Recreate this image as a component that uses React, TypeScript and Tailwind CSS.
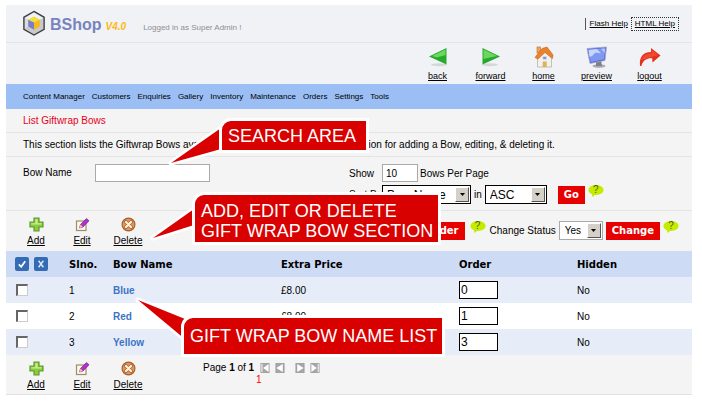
import React from "react";

type IconProps = { className?: string };

function Logo() {
  return (
    <svg viewBox="0 0 24 28" className="h-[27px] w-[24px] shrink-0" aria-hidden="true">
      <polygon points="12,1.5 22.5,7.5 22.5,20 12,26 1.5,20 1.5,7.5" fill="#c9c9cc" stroke="#3c3c40" strokeWidth="1.4" />
      <polygon points="12,2.8 21.3,8.2 18,10 12,7 6,10 2.7,8.2" fill="#f2f2f3" />
      <polygon points="2.7,8.2 6,10 6,17 2.7,19.2" fill="#dcdcde" />
      <polygon points="12,7 18,10 12,13 6,10" fill="#f2e22c" />
      <polygon points="6,10 12,13 12,20.5 6,17" fill="#7580c6" />
      <polygon points="18,10 12,13 12,20.5 18,17" fill="#fbb81c" />
    </svg>
  );
}

function BackIcon() {
  return (
    <svg viewBox="0 0 20 20" className="size-5" aria-hidden="true">
      <ellipse cx="11" cy="17.8" rx="8" ry="1.5" fill="#d3d8d6" />
      <polygon points="1,9.5 18.5,1 18.5,17.5" fill="#27a92b" />
      <polygon points="4,9 17.5,2.5 17.5,8 9,10.5" fill="#6bd75f" />
    </svg>
  );
}

function ForwardIcon() {
  return (
    <svg viewBox="0 0 20 20" className="size-5" aria-hidden="true">
      <ellipse cx="9" cy="17.8" rx="8" ry="1.5" fill="#d3d8d6" />
      <polygon points="19,9.5 1.5,1 1.5,17.5" fill="#27a92b" />
      <polygon points="16,9 2.5,2.5 2.5,12 9,10.5" fill="#6bd75f" />
    </svg>
  );
}

function HomeIcon() {
  return (
    <svg viewBox="0 0 20 22" className="h-[22px] w-5" aria-hidden="true">
      <polygon points="3.5,11 10.5,4.5 17.5,12 17.5,21 3.5,21" fill="#f4f1ea" stroke="#b6b3ad" strokeWidth="0.8" />
      <rect x="3" y="1" width="3.4" height="6" fill="#f0a35c" stroke="#c46a22" strokeWidth="0.6" />
      <path d="M1 11.5 L8 2.5 L13 1 L19 9 L18.5 12.5 L11 6.5 L4 13 Z" fill="#e9822b" stroke="#c2611b" strokeWidth="0.6" />
      <rect x="8.8" y="10.4" width="3.8" height="3" rx="0.8" fill="#7f95d8" stroke="#dde2f4" strokeWidth="0.7" />
      <rect x="8.7" y="15.5" width="4" height="5.5" fill="#d9b560" />
    </svg>
  );
}

function PreviewIcon() {
  return (
    <svg viewBox="0 0 22 22" className="size-[22px]" aria-hidden="true">
      <ellipse cx="13" cy="20" rx="6.5" ry="1.7" fill="#a9abb0" />
      <polygon points="10,15 15,14 16,20 10,20" fill="#7e8086" />
      <polygon points="1,2.5 20.5,1 19,14.5 4,17.5" fill="#5b6bd0" stroke="#a3a9c9" strokeWidth="0.8" />
      <polygon points="2.3,3.6 19.3,2.3 18,13.3 4.8,16" fill="#7f98f2" />
      <path d="M2.5 4 L11 3 L15 7.5 L9.5 6.5 L6 10 L3.6 11 Z" fill="#c8d6ff" />
      <path d="M15 2.8 L19 2.6 L18.6 7 Z" fill="#b7c7ff" />
    </svg>
  );
}

function LogoutIcon() {
  return (
    <svg viewBox="0 0 22 20" className="h-5 w-[22px]" aria-hidden="true">
      <path d="M1 19 C0 9 5 5 12 5 L12 1 L21.5 8.5 L13.5 15.5 L13.2 11.3 C8 11 4 13 2.4 19 Z" fill="#e5301c" />
      <path d="M2.5 13 C4 8 8 6.5 13 6.5 L13 3 L19 8 Z" fill="#ee4a2e" />
    </svg>
  );
}

function AddIcon() {
  return (
    <svg viewBox="0 0 15 15" className="size-[15px]" aria-hidden="true">
      <path d="M5 1 H10 V5 H14 V10 H10 V14 H5 V10 H1 V5 H5 Z" fill="#8ccb3c" stroke="#5c9a30" strokeWidth="1.2" />
      <path d="M6.3 2.3 H8.7 V6.3 H12.7 V7.5 H2.3 V6.3 H6.3 Z" fill="#c9ec8c" />
    </svg>
  );
}

function EditIcon() {
  return (
    <svg viewBox="0 0 15 15" className="size-[15px]" aria-hidden="true">
      <rect x="1.5" y="4" width="9.5" height="9.5" fill="#fbf8ee" stroke="#9a8f62" strokeWidth="1.2" />
      <path d="M4.5 11 L5.5 7.5 L11.5 1.5 L14 3.8 L8 10 Z" fill="#b52fd0" stroke="#7c1a96" strokeWidth="0.7" />
      <path d="M4.3 11.2 L5.5 7.6 L7.9 10 Z" fill="#efc48e" />
    </svg>
  );
}

function DeleteIcon() {
  return (
    <svg viewBox="0 0 15 15" className="size-[15px]" aria-hidden="true">
      <circle cx="7.5" cy="7.5" r="6.4" fill="#e0985c" stroke="#a95f2b" strokeWidth="1.2" />
      <path d="M5 5 L10 10 M10 5 L5 10" stroke="#b0632d" strokeWidth="3.8" strokeLinecap="round" />
      <path d="M5 5 L10 10 M10 5 L5 10" stroke="#fff3e6" strokeWidth="2.2" strokeLinecap="round" />
    </svg>
  );
}

function HelpBubble() {
  return (
    <button type="button" aria-label="Help" className="relative flex h-3 w-4 items-start justify-center">
      <svg viewBox="0 0 16 12" className="absolute inset-0 h-3 w-4" aria-hidden="true">
        <ellipse cx="8" cy="5" rx="7.6" ry="4.9" fill="#c3ec00" />
        <polygon points="3.5,8 4.5,12 8,9" fill="#c3ec00" />
      </svg>
      <span className="relative text-[10px] leading-[10px] text-[#4d5a10]">?</span>
    </button>
  );
}

const pagerShapes: { label: string; bar: number | null; points: string }[] = [
  { label: "First page", bar: 1, points: "9,1 9,10 3,5.5" },
  { label: "Previous page", bar: null, points: "8,1 8,10 1,5.5" },
  { label: "Next page", bar: null, points: "2,1 2,10 9,5.5" },
  { label: "Last page", bar: 8, points: "1,1 1,10 7,5.5" },
];

function PagerButton({ index }: { index: number }) {
  const { label, bar, points } = pagerShapes[index];
  return (
    <button type="button" aria-label={label} className="size-[10px]">
      <svg viewBox="0 0 10 11" className="size-full" aria-hidden="true">
        <rect x="0.5" y="0.5" width="9" height="10" fill="#a6a6a6" stroke="#a0a0a0" />
        {bar !== null && <rect x={bar} y="1" width="1.2" height="9" fill="#f4f4f4" />}
        <polygon points={points} fill="#fff" />
      </svg>
    </button>
  );
}

const quickLinks: { label: string; Icon: (p: IconProps) => React.JSX.Element }[] = [
  { label: "back", Icon: BackIcon },
  { label: "forward", Icon: ForwardIcon },
  { label: "home", Icon: HomeIcon },
  { label: "preview", Icon: PreviewIcon },
  { label: "logout", Icon: LogoutIcon },
];

const menu = ["Content Manager", "Customers", "Enquiries", "Gallery", "Inventory", "Maintenance", "Orders", "Settings", "Tools"];

const bows = [
  { id: 1, name: "Blue", price: "£8.00", order: "0", hidden: "No", shade: "bg-[#e6edf9]" },
  { id: 2, name: "Red", price: "£8.00", order: "1", hidden: "No", shade: "bg-white" },
  { id: 3, name: "Yellow", price: "£8.00", order: "3", hidden: "No", shade: "bg-[#e6edf9]" },
];

function ActionLinks() {
  const actions = [
    { label: "Add", Icon: AddIcon },
    { label: "Edit", Icon: EditIcon },
    { label: "Delete", Icon: DeleteIcon },
  ];
  return (
    <div className="flex pl-[7px]">
      {actions.map(({ label, Icon }) => (
        <a key={label} href="#" className="flex w-[46px] flex-col items-center gap-[3px] leading-3 underline">
          <Icon />
          {label}
        </a>
      ))}
    </div>
  );
}

function ClassicSelect({ id, options, className, boxClassName }: { id: string; options: string[]; className: string; boxClassName: string }) {
  return (
    <span className={"relative flex bg-white " + boxClassName}>
      <select id={id} className={"h-full w-full appearance-none bg-transparent outline-none " + className}>
        {options.map((o) => (
          <option key={o}>{o}</option>
        ))}
      </select>
      <span className="pointer-events-none absolute inset-y-px right-px flex w-[14px] items-center justify-center border border-t-white border-l-white border-r-[#555] border-b-[#555] bg-[#d4d0c8]">
        <svg viewBox="0 0 5 3" className="h-[3px] w-[5px]" aria-hidden="true">
          <polygon points="0,0 5,0 2.5,3" fill="#000" />
        </svg>
      </span>
    </span>
  );
}

function RedButton({ children }: { children: React.ReactNode }) {
  return (
    <button type="button" className="h-[18px] bg-[#e60000] px-[6px] font-['DejaVu_Sans',sans-serif] text-[10px] font-bold whitespace-nowrap text-white">
      {children}
    </button>
  );
}

function Callout({ className, tailClassName, viewBox, points, children }: { className: string; tailClassName: string; viewBox: string; points: string; children: React.ReactNode }) {
  return (
    <>
      <svg viewBox={viewBox} className={"absolute " + tailClassName} aria-hidden="true">
        <polygon points={points} fill="#fff" stroke="#fff" strokeWidth="5" strokeLinejoin="round" />
        <polygon points={points} fill="#d90000" />
      </svg>
      <div className={"absolute flex items-center rounded-tl-xl border-3 border-white bg-[#d90000] pl-[6px] text-[18px] leading-5 whitespace-nowrap text-white " + className}>
        {children}
      </div>
    </>
  );
}

export default function App() {
  return (
    <div className="relative bg-white pt-[5px] pr-[10px] pb-2 pl-[6px] font-['Liberation_Sans',Arial,sans-serif] text-[10px] text-black">
      <header className="bg-[#f1f2f6]">
        <div className="flex h-[38px] items-center border-b border-[#e2e4e8] pr-[13px] pl-4">
          <Logo />
          <h1 className="mt-[2px] ml-1 text-[16px] font-bold text-[#7784bd]">BShop</h1>
          <span className="mt-[6px] ml-[4px] font-bold text-[#fdb913] italic">V4.0</span>
          <span className="mt-2 ml-[17px] text-[8px] text-[#8d8d92]">Logged in as Super Admin !</span>
          <div className="ml-auto flex items-center text-[8px]">
            <a href="#" className="border-l border-[#555] pr-[3px] pl-1 leading-3 underline">Flash Help</a>
            <a href="#" className="border border-dotted border-[#333] px-[3px] leading-3 underline">HTML Help</a>
          </div>
        </div>
        <div className="flex h-[41px] justify-end pr-4">
          {quickLinks.map(({ label, Icon }) => (
            <a key={label} href="#" className="flex w-[53px] flex-col items-center text-[9px] leading-3 underline">
              <span className="flex h-[27px] items-center">
                <Icon />
              </span>
              {label}
            </a>
          ))}
        </div>
      </header>

      <nav className="flex h-[25px] items-center gap-[7px] bg-[#9bbef5] pl-[17px] text-[8px]">
        {menu.map((m) => (
          <a key={m} href="#">{m}</a>
        ))}
      </nav>

      <main className="bg-[#f4f4f4]">
        <h2 className="flex h-6 items-center border-b border-[#e4e4e4] pl-[17px] text-[#e8001c]">List Giftwrap Bows</h2>
        <p className="flex h-6 items-center border-b border-[#e4e4e4] pl-[17px] whitespace-nowrap">
          This section lists the Giftwrap Bows available. There you will also have the option for adding a Bow, editing, &amp; deleting it.
        </p>

        <form className="grid h-[54px] grid-cols-2 border-b border-[#e4e4e4] pt-[7px]">
          <div className="flex items-start pl-[17px]">
            <label htmlFor="bow-name" className="w-[72px] leading-[18px]">Bow Name</label>
            <input id="bow-name" type="text" className="h-[18px] w-[115px] border border-[#aaa] bg-white px-1" />
          </div>
          <div className="flex flex-col gap-[3px]">
            <div className="flex items-center">
              <label htmlFor="page-size" className="w-[33px]">Show</label>
              <input id="page-size" type="text" defaultValue="10" className="mr-[2px] h-[18px] w-9 border border-[#aaa] bg-white px-[3px]" />
              <span>Bows Per Page</span>
            </div>
            <div className="flex items-center">
              <label htmlFor="sort-by" className="w-[33px] whitespace-nowrap">Sort By</label>
              <ClassicSelect id="sort-by" options={["Bow Name", "Order"]} boxClassName="h-[19px] w-[89px] border border-black" className="pl-1 text-[12px]" />
              <label htmlFor="sort-dir" className="px-[3px]">in</label>
              <ClassicSelect id="sort-dir" options={["ASC", "DESC"]} boxClassName="mr-[11px] h-[19px] w-[62px] border border-black" className="pl-1 text-[12px]" />
              <RedButton>Go</RedButton>
              <span className="ml-[3px] self-start">
                <HelpBubble />
              </span>
            </div>
          </div>
        </form>

        <div className="flex h-10 items-start pt-[6px]">
          <ActionLinks />
          <div className="ml-auto flex items-center pt-[4px] pr-[13px]">
            <RedButton>Change Order</RedButton>
            <span className="mr-1 ml-[5px] self-start">
              <HelpBubble />
            </span>
            <label htmlFor="status" className="mr-[3px]">Change Status</label>
            <ClassicSelect id="status" options={["Yes", "No"]} boxClassName="mr-[3px] h-[19px] w-11 border border-[#aaa]" className="pl-[5px] text-[10px]" />
            <RedButton>Change</RedButton>
            <span className="ml-[3px] self-start">
              <HelpBubble />
            </span>
          </div>
        </div>

        <table className="w-full table-fixed border-collapse text-left">
          <thead>
            <tr className="h-[26px] bg-[#cddcf4] font-['DejaVu_Sans',sans-serif]">
              <th className="w-[63px] pl-[9px]">
                <div className="flex gap-[5px]">
                  <button type="button" aria-label="Select all" className="size-[14px] rounded-xs bg-[#336cb5] p-[3px]">
                    <svg viewBox="0 0 10 10" aria-hidden="true">
                      <path d="M1 5.5 L4 8.5 L9 1.5" fill="none" stroke="#fff" strokeWidth="2.2" />
                    </svg>
                  </button>
                  <button type="button" aria-label="Clear selection" className="size-[14px] rounded-xs bg-[#336cb5] p-[3px]">
                    <svg viewBox="0 0 10 10" aria-hidden="true">
                      <path d="M2 1 L8 9 M8 1 L2 9" fill="none" stroke="#dce8f8" strokeWidth="1.8" />
                    </svg>
                  </button>
                </div>
              </th>
              <th className="w-[44px]">Slno.</th>
              <th className="w-[168px]">Bow Name</th>
              <th className="w-[178px]">Extra Price</th>
              <th className="w-[118px]">Order</th>
              <th className="w-[115px]">Hidden</th>
            </tr>
          </thead>
          <tbody>
            {bows.map((b) => (
              <tr key={b.id} className={"h-[26px] " + b.shade}>
                <td className="pl-[10px]">
                  <input
                    type="checkbox"
                    aria-label={"Select " + b.name}
                    className="block size-3 appearance-none border-t-2 border-r border-b border-l-2 border-t-[#666] border-r-[#ccc] border-b-[#ccc] border-l-[#666] bg-white"
                  />
                </td>
                <td>{b.id}</td>
                <td>
                  <a href="#" className="font-bold text-[#3c74c4]">{b.name}</a>
                </td>
                <td>{b.price}</td>
                <td>
                  <input type="text" aria-label={"Order of " + b.name} defaultValue={b.order} className="block h-[18px] w-[39px] border border-black bg-white pl-px text-[12px]" />
                </td>
                <td>{b.hidden}</td>
              </tr>
            ))}
          </tbody>
        </table>

        <footer className="flex h-10 items-start border-b border-[#e2e2e2] pt-[6px]">
          <ActionLinks />
          <div className="ml-[52px] pt-[1px] leading-3">
            <div className="flex items-center">
              <span>
                Page <b>1</b> of <b>1</b>
              </span>
              <span className="ml-[6px] flex gap-[5px]">
                <PagerButton index={0} />
                <PagerButton index={1} />
              </span>
              <span className="ml-[10px] flex gap-[5px]">
                <PagerButton index={2} />
                <PagerButton index={3} />
              </span>
            </div>
            <a href="#" className="ml-[53px] text-[#f00]">1</a>
          </div>
        </footer>
      </main>

      <Callout className="top-[118px] left-[219px] h-[35px] w-[150px]" tailClassName="top-[120px] left-[165px] h-[50px] w-[60px]" viewBox="165 120 60 50" points="221,128 171,163 221,149">
        SEARCH AREA
      </Callout>
      <Callout className="top-[192px] left-[192px] h-[53px] w-[249px] pt-[5px]" tailClassName="top-[200px] left-[145px] h-[50px] w-[60px]" viewBox="145 200 60 50" points="194,209 153,238 194,225">
        <span>
          ADD, EDIT OR DELETE
          <br />
          GIFT WRAP BOW SECTION
        </span>
      </Callout>
      <Callout className="top-[315px] left-[181px] h-[42px] w-[264px]" tailClassName="top-[290px] left-[130px] h-[60px] w-[70px]" viewBox="130 290 70 60" points="190,321 138,300 186,340">
        GIFT WRAP BOW NAME LIST
      </Callout>
    </div>
  );
}
